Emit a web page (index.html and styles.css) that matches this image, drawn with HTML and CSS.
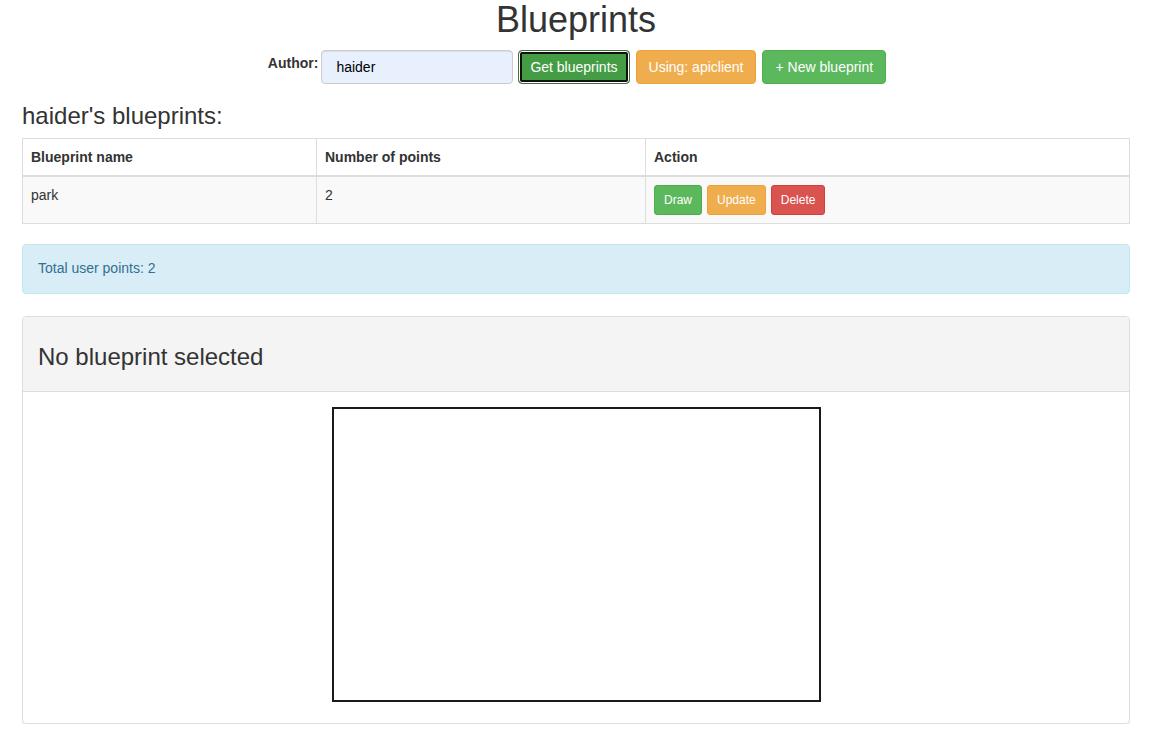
FILE: index.html
```html
<!DOCTYPE html>
<html>
<head>
<meta charset="utf-8">
<title>Blueprints</title>
<link rel="stylesheet" href="styles.css">
</head>
<body>
<div class="page">
  <h1 class="title">Blueprints</h1>
  <div class="author-form">
    <label class="author-label" for="author">Author:</label>
    <input id="author" class="author-input" type="text" value="haider">
    <button class="btn btn-focus">Get blueprints</button>
    <button class="btn btn-warning">Using: apiclient</button>
    <button class="btn btn-success">+ New blueprint</button>
  </div>

  <h3 class="section-title">haider's blueprints:</h3>

  <table class="bp-table">
    <colgroup>
      <col class="col-name">
      <col class="col-points">
      <col class="col-action">
    </colgroup>
    <thead>
      <tr>
        <th>Blueprint name</th>
        <th>Number of points</th>
        <th>Action</th>
      </tr>
    </thead>
    <tbody>
      <tr>
        <td>park</td>
        <td>2</td>
        <td>
          <div class="actions">
            <button class="btn btn-sm btn-success">Draw</button>
            <button class="btn btn-sm btn-warning">Update</button>
            <button class="btn btn-sm btn-danger">Delete</button>
          </div>
        </td>
      </tr>
    </tbody>
  </table>

  <div class="alert-info">Total user points: 2</div>

  <div class="panel">
    <div class="panel-heading">
      <h3 class="panel-title">No blueprint selected</h3>
    </div>
    <div class="panel-body">
      <canvas class="bp-canvas" width="485" height="291"></canvas>
    </div>
  </div>
</div>
</body>
</html>
```

FILE: styles.css
```css
* { box-sizing: border-box; }

html, body {
  margin: 0;
  padding: 0;
  background: #fff;
}

body {
  font-family: "Liberation Sans", Arial, Helvetica, sans-serif;
  font-size: 14px;
  line-height: 1.42857;
  color: #333;
}

.page {
  padding: 0 26px 0 22px;
}

.title {
  margin: 0 0 10px;
  font-size: 36px;
  font-weight: 500;
  line-height: 1.1;
  text-align: center;
  color: #333;
}

.author-form {
  display: flex;
  justify-content: center;
  align-items: center;
  padding-left: 2px;
}

.author-label {
  font-weight: bold;
  margin: 0 3px 5px 0;
}

.author-input {
  width: 192px;
  height: 34px;
  padding: 6px 14px;
  font-family: inherit;
  font-size: 14px;
  color: #000;
  background: #e8f0fe;
  border: 1px solid #ccc;
  border-radius: 4px;
  box-shadow: inset 0 1px 1px rgba(0,0,0,.075);
  margin-right: 5px;
}

.btn {
  display: inline-block;
  font-family: inherit;
  font-size: 14px;
  line-height: 20px;
  padding: 6px 12px;
  border: 1px solid transparent;
  border-radius: 4px;
  color: #fff;
  cursor: pointer;
  white-space: nowrap;
}

.author-form .btn { margin-right: 6px; }
.author-form .btn:last-child { margin-right: 0; }

.btn-focus {
  background: #449d44;
  border-color: #3f6f3f;
  box-shadow: inset 0 0 0 1px #fff, inset 0 0 0 3px #111;
  padding: 6px 11px;
}

.btn-success {
  background: #5cb85c;
  border-color: #4cae4c;
}

.btn-warning {
  background: #f0ad4e;
  border-color: #eea236;
}

.btn-danger {
  background: #d9534f;
  border-color: #d43f3a;
}

.btn-sm {
  font-size: 12px;
  line-height: 18px;
  padding: 5px 9px;
  border-radius: 3px;
}

.section-title {
  margin: 19px 0 9px;
  font-size: 24px;
  font-weight: 500;
  line-height: 1.1;
}

.bp-table {
  width: 100%;
  table-layout: fixed;
  border-collapse: collapse;
  border: 1px solid #ddd;
  margin-bottom: 20px;
}

.col-name { width: 294px; }
.col-points { width: 329px; }

.bp-table th,
.bp-table td {
  border: 1px solid #ddd;
  padding: 8px;
  text-align: left;
  vertical-align: top;
  line-height: 20px;
}

.bp-table thead th {
  border-bottom-width: 2px;
  font-weight: bold;
  background: #fff;
}

.bp-table tbody tr {
  background: #f9f9f9;
}

.actions {
  display: flex;
  gap: 5px;
}

.alert-info {
  padding: 14px 15px;
  background: #d9edf7;
  border: 1px solid #bce8f1;
  border-radius: 4px;
  color: #31708f;
  margin-bottom: 22px;
}

.panel {
  border: 1px solid #ddd;
  border-radius: 4px;
  background: #fff;
  box-shadow: 0 1px 1px rgba(0,0,0,.05);
}

.panel-heading {
  padding: 10px 15px;
  background: #f4f4f4;
  border-bottom: 1px solid #ddd;
  border-radius: 3px 3px 0 0;
}

.panel-title {
  margin: 17px 0 11px;
  font-size: 24px;
  font-weight: 500;
  line-height: 1.1;
}

.panel-body {
  padding: 15px;
  text-align: center;
}

.bp-canvas {
  border: 2px solid #1a1a1a;
  background: #fff;
  vertical-align: baseline;
}
```
